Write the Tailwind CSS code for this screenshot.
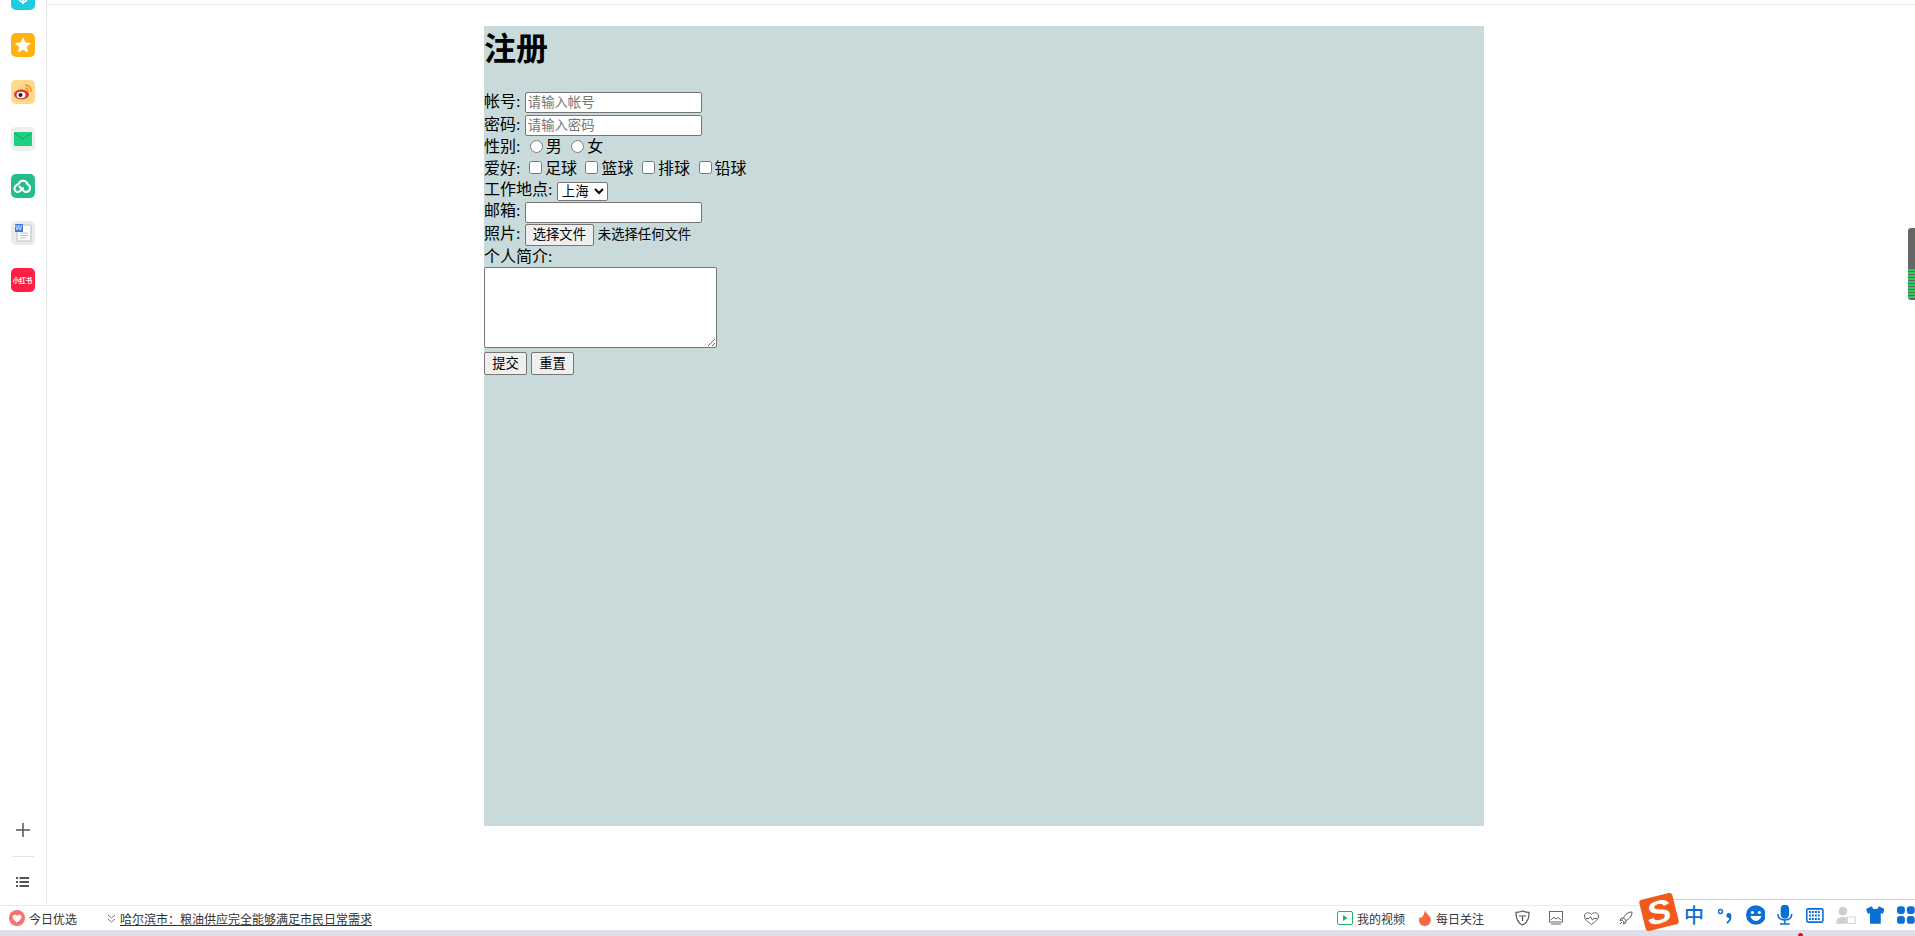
<!DOCTYPE html>
<html lang="zh-CN">
<head>
  <meta charset="UTF-8">
  <title>注册</title>
  <script src="https://cdn.jsdelivr.net/npm/@tailwindcss/browser@4"></script>
</head>
<body class="bg-white">
  <div class="relative flex flex-col h-[936px] w-[1915px] overflow-hidden font-['Liberation_Serif','Noto_Sans_CJK_SC',serif] text-black">
    <div class="flex h-[905px]">
      <!-- 左侧边栏 -->
      <aside class="flex flex-col items-center w-[47px] h-full border-r border-[#e4e4e4] overflow-hidden pr-[1px]">
        <div class="flex flex-col gap-[23px] -mt-[14px]">
          <div class="w-6 h-6 rounded-[5px] bg-[#1fcbe0] flex items-center justify-center">
            <svg width="14" height="14" viewBox="0 0 14 14" fill="none" stroke="#fff" stroke-width="2"><path d="M3 3v4a4 4 0 0 0 8 0V3M7 7v6"/></svg>
          </div>
          <div class="w-6 h-6 rounded-[5px] bg-[#ffb30f] flex items-center justify-center">
            <svg width="18" height="18" viewBox="0 0 24 24" fill="#fff"><path d="M12 1.500l3.300 7 7.500.9-5.600 5.200 1.500 7.600-6.700-3.800-6.700 3.800 1.500-7.600L1.200 9.400l7.500-.9z"/></svg>
          </div>
          <div class="w-6 h-6 rounded-[5px] bg-[#ffd98c] flex items-center justify-center">
            <svg width="22" height="22" viewBox="0 0 22 22" fill="none"><ellipse cx="9.500" cy="13.500" rx="7.500" ry="5" fill="#e6342a"/><ellipse cx="9" cy="14" rx="4.500" ry="3.200" fill="#fff"/><circle cx="8.500" cy="14" r="2" fill="#222"/><path d="M13 4a6 6 0 0 1 6 7" stroke="#f08a1d" stroke-width="1.500"/><path d="M13 7a3 3 0 0 1 3 4" stroke="#f08a1d" stroke-width="1.300"/></svg>
          </div>
          <div class="w-6 h-6 rounded-[5px] bg-[#eeeeee] flex items-center justify-center">
            <svg width="18" height="14" viewBox="0 0 18 14"><rect width="18" height="14" rx="1" fill="#1fcf80"/><path d="M0 1l9 6 9-6" fill="none" stroke="#12a864" stroke-width="1"/></svg>
          </div>
          <div class="w-6 h-6 rounded-[5px] bg-[#25bd8c] flex items-center justify-center">
            <svg width="22" height="18" viewBox="0 0 22 18" fill="none" stroke="#fff" stroke-width="2"><path d="M7 9c2 2 4 6 7 6a4 4 0 0 0 1.500-7.700A4.500 4.500 0 0 0 7 6.500C5.500 8 3 8 2.500 11a3.500 3.500 0 0 0 3.500 4c2.500 0 4-3 5.500-4.500"/></svg>
          </div>
          <div class="relative w-6 h-6 rounded-[5px] bg-[#ebebeb] flex items-center justify-center">
            <svg width="16" height="18" viewBox="0 0 16 18" class="ml-[2px]"><rect x="1" y="1" width="14" height="16" rx="1" fill="#fff" stroke="#c4c4c4" stroke-width="1.200"/><path d="M4 9h8M4 11.500h8M4 14h6" stroke="#c4c4c4"/></svg>
            <span class="absolute left-[4px] top-[3px] w-2 h-2 bg-[#3c78ea] text-white text-[7px] leading-[8px] text-center font-['Liberation_Sans']">W</span>
          </div>
          <div class="w-6 h-6 rounded-[5px] bg-[#ff1f45] flex items-center justify-center overflow-hidden">
            <span class="text-white text-[6.500px] font-bold leading-none whitespace-nowrap font-['Noto_Sans_CJK_SC']">小红书</span>
          </div>
        </div>
        <div class="mt-auto flex flex-col items-center w-full">
          <svg width="14" height="14" viewBox="0 0 14 14" stroke="#555" stroke-width="1.500"><path d="M7 0v14M0 7h14"/></svg>
          <div class="w-[22px] h-px bg-[#e4e4e4] mt-[19px] mb-[20px]"></div>
          <svg width="13" height="10" viewBox="0 0 13 10" fill="#555" class="mb-[18px]"><path d="M0 0h2v2H0zM3.500 0H13v2H3.500zM0 4h2v2H0zM3.500 4H13v2H3.500zM0 8h2v2H0zM3.500 8H13v2H3.500z"/></svg>
        </div>
      </aside>

      <!-- 主内容 -->
      <main class="flex-1">
        <div class="h-[5px] border-b border-[#ececec]"></div>
        <div class="w-[1000px] h-[800px] mt-[21px] ml-[437px] bg-[#c8dbda] text-[16px]">
          <h1 class="text-[32px] font-bold leading-[37px] pt-[2px] mb-[26px] font-['Noto_Sans_CJK_SC']">注册</h1>
          <form>
            <div class="flex items-center h-[23px]"><label class="mb-[2px]">帐号:</label><input type="text" placeholder="请输入帐号" class="ml-[4.400px] w-[177px] h-[21px] px-[2px] bg-white border border-[#767676] rounded-[2px] text-[13.330px] placeholder:text-[#757575]"></div>
            <div class="flex items-center h-[23px]"><label class="mb-[2px]">密码:</label><input type="password" placeholder="请输入密码" class="ml-[4.400px] w-[177px] h-[21px] px-[2px] bg-white border border-[#767676] rounded-[2px] text-[13.330px] placeholder:text-[#757575]"></div>
            <div class="flex items-center h-[22px]"><label class="mb-[2px]">性别:</label>
              <input type="radio" name="sex" class="ml-[9.400px] mr-[3px] mb-[4px] w-[13px] h-[13px]"><span class="mb-[2px]">男</span>
              <input type="radio" name="sex" class="ml-[9.400px] mr-[3px] mb-[4px] w-[13px] h-[13px]"><span class="mb-[2px]">女</span>
            </div>
            <div class="flex items-center h-[22px]"><label class="mb-[3px]">爱好:</label>
              <input type="checkbox" class="ml-[8.500px] mr-[3px] mb-[5px] w-[13px] h-[13px]"><span class="mb-[3px]">足球</span>
              <input type="checkbox" class="ml-[8.500px] mr-[3px] mb-[5px] w-[13px] h-[13px]"><span class="mb-[3px]">篮球</span>
              <input type="checkbox" class="ml-[8.500px] mr-[3px] mb-[5px] w-[13px] h-[13px]"><span class="mb-[3px]">排球</span>
              <input type="checkbox" class="ml-[8.500px] mr-[3px] mb-[5px] w-[13px] h-[13px]"><span class="mb-[3px]">铅球</span>
            </div>
            <div class="flex items-center h-[20px]"><label class="mb-[2px]">工作地点:</label>
              <select class="ml-[4.400px] w-[51px] h-[19px] bg-white border border-[#767676] rounded-[2px] text-[13.330px] leading-none"><option>上海</option><option>北京</option></select>
            </div>
            <div class="flex items-center h-[22px]"><label class="mb-[2px]">邮箱:</label><input type="email" class="ml-[4.400px] w-[177px] h-[21px] px-[2px] bg-white border border-[#767676] rounded-[2px] text-[13.330px]"></div>
            <div class="flex items-center h-[23px]"><label class="mb-[2px]">照片:</label>
              <button type="button" class="ml-[4.400px] w-[69px] h-[22px] bg-[#efefef] border border-[#767676] rounded-[2px] text-[13.330px] leading-none">选择文件</button>
              <span class="ml-[4px] text-[13.330px]">未选择任何文件</span>
            </div>
            <div class="h-[21px] leading-[21px]"><label>个人简介:</label></div>
            <textarea class="block w-[233px] h-[81px] bg-white border border-[#767676] rounded-[2px]"></textarea>
            <div class="flex gap-[4px] mt-[4px]">
              <button type="submit" class="w-[43px] h-[23px] bg-[#efefef] border border-[#767676] rounded-[2px] text-[13.330px] leading-none">提交</button>
              <button type="reset" class="w-[43px] h-[23px] bg-[#efefef] border border-[#767676] rounded-[2px] text-[13.330px] leading-none">重置</button>
            </div>
          </form>
        </div>
      </main>
    </div>

    <!-- 底部状态栏 -->
    <footer class="flex items-center h-[25px] border-t border-[#ebebeb] text-[12px] text-[#333] font-['Noto_Sans_CJK_SC']">
      <svg width="16" height="16" viewBox="0 0 16 16" class="ml-[9px]"><circle cx="8" cy="8" r="8" fill="#fb6f6f"/><path d="M8 12.500C5 10.300 3.500 8.800 3.500 6.800 3.500 4.500 6.700 4 8 6c1.300-2 4.500-1.500 4.500.8 0 2-1.500 3.500-4.500 5.700z" fill="#fff"/></svg>
      <span class="ml-[4px] w-[48px] mt-[2px]">今日优选</span>
      <svg width="9" height="9" viewBox="0 0 9 9" fill="none" stroke="#777" class="ml-[30px]"><path d="M1 1l3.500 3L8 1M1 5l3.500 3L8 5"/></svg>
      <a class="ml-[4px] underline mt-[2px]">哈尔滨市：粮油供应完全能够满足市民日常需求</a>
      <svg width="16" height="14" viewBox="0 0 16 14" fill="none" class="ml-[965px]"><rect x=".5" y=".5" width="15" height="13" rx="1.500" stroke="#1fb45f"/><path d="M6 4l4.500 3L6 10z" fill="#1fb45f"/></svg>
      <span class="ml-[4px] w-[48px] mt-[2px]">我的视频</span>
      <svg width="14" height="16" viewBox="0 0 14 16" class="ml-[13px]"><path d="M7 0c.500 3 3 4 5 7 2 3.500 0 9-5 9s-7-4.500-5.500-8C2 6.500 3 8 3.500 8 5 6 6.500 3.500 7 0z" fill="#f7683f"/></svg>
      <span class="ml-[4px] w-[48px] mt-[2px]">每日关注</span>
      <svg width="15" height="16" viewBox="0 0 15 16" fill="none" stroke="#555" stroke-width="1.200" class="ml-[31px]"><path d="M7.500 1C5 2 3 2.300 1 2.300 .8 8 2 12.500 7.500 15 13 12.500 14.200 8 14 2.300 12 2.300 10 2 7.500 1zM4 6h7M7.500 6v5"/></svg>
      <svg width="14" height="14" viewBox="0 0 14 14" fill="none" stroke="#666" class="ml-[19px]"><rect x=".5" y=".5" width="13" height="10.500"/><path d="M2 9l3-3 2 2 2-1.500L12 9M2 13h10"/></svg>
      <svg width="15" height="13" viewBox="0 0 15 13" fill="none" stroke="#666" class="ml-[21px]"><path d="M7.500 12.500C3 9.500 .5 7 .5 4 .5.500 5.500-.5 7.500 2.500 9.500-.5 14.500.5 14.500 4c0 3-2.500 5.500-7 8.500zM2 6.500h3l1.500-2 2 3.500 1-1.500H13"/></svg>
      <svg width="14" height="14" viewBox="0 0 14 14" fill="none" stroke="#555" class="ml-[20px]"><path d="M13 1C9 1 6 3.500 4.500 7L7 9.500C10.500 8 13 5 13 1zM4.500 7L2 7.500 1 9.500l3-.5M7 9.500l-.5 2.500-2 1 .5-3M3 11l-2 2"/></svg>
    </footer>
    <div class="h-[6px] bg-[#dfdfeb]"></div>

    <!-- 输入法工具条（浮在页面之上） -->
    <div class="absolute left-[1668px] top-[899px] w-[247px] h-[31px] border-t border-[#bcd4e6] bg-white flex items-center text-[#0b6fd6]">
      <span class="ml-[16px] text-[20px] leading-none font-medium font-['Noto_Sans_CJK_SC']">中</span>
      <svg width="17" height="18" viewBox="0 0 17 18" fill="none" class="ml-[14px]"><circle cx="2.500" cy="5.500" r="2" stroke="#0b6fd6" stroke-width="1.500"/><circle cx="11" cy="9.500" r="2.500" fill="#0b6fd6"/><path d="M12.500 9.500C13 13 11.500 15.500 9 17" stroke="#0b6fd6" stroke-width="2"/></svg>
      <svg width="20" height="20" viewBox="0 0 20 20" class="ml-[11px]"><circle cx="10" cy="10" r="10" fill="#0b6fd6"/><circle cx="6.500" cy="7.500" r="1.600" fill="#fff"/><circle cx="13.500" cy="7.500" r="1.600" fill="#fff"/><path d="M4.500 11h11c-.5 3-2.800 5-5.500 5s-5-2-5.500-5z" fill="#fff"/></svg>
      <svg width="16" height="20" viewBox="0 0 16 20" fill="none" stroke="#0b6fd6" stroke-width="1.500" class="ml-[12px]"><rect x="4.500" y="0" width="7" height="13" rx="3.500" fill="#0b6fd6"/><path d="M1 9c0 4 3 6 7 6s7-2 7-6M8 15v4M3 19.200h10"/></svg>
      <svg width="18" height="15" viewBox="0 0 18 15" class="ml-[13px]"><rect x=".8" y=".8" width="16.400" height="13.400" rx="1.500" fill="#fff" stroke="#0b6fd6" stroke-width="1.600"/><path d="M3 4h12M3 7.500h12M3 11h12" stroke="#0b6fd6" stroke-width="2" stroke-dasharray="2 1"/></svg>
      <svg width="20" height="18" viewBox="0 0 20 18" class="ml-[12px]"><circle cx="7" cy="5" r="4.500" fill="#cfcfcf"/><path d="M0 18c0-5 3-7 7-7 2 0 3 .5 4 1v6z" fill="#cfcfcf"/><rect x="11.500" y="11" width="8" height="6.500" fill="#fff" stroke="#cfcfcf"/></svg>
      <svg width="19" height="18" viewBox="0 0 19 18" fill="#0b6fd6" class="ml-[10px]"><path d="M6 0L0 3l2 5 2-1v11h11V7l2 1 2-5-6-3c-.5 2-1.500 3-3.500 3S6.500 2 6 0z"/></svg>
      <svg width="18" height="18" viewBox="0 0 18 18" fill="#0b6fd6" class="ml-[13px]"><rect width="8" height="8" rx="3"/><rect x="10" width="8" height="8" rx="3"/><rect y="10" width="8" height="8" rx="3"/><rect x="10" y="10" width="8" height="8" rx="3"/></svg>
    </div>
    <div class="absolute left-[1642px] top-[896px] w-[34px] h-[32px] rounded-[3px] bg-[#f25a1c] -rotate-[14deg] flex items-center justify-center">
      <span class="text-white text-[32px] font-bold italic leading-none scale-x-[1.15] font-['Liberation_Sans']">S</span>
    </div>
    <div class="absolute left-[1798px] top-[933px] w-[5px] h-[5px] rounded-full bg-[#e0101a]"></div>

    <!-- 右侧悬浮条 -->
    <div class="absolute left-[1908px] top-[228px] w-[7px] h-[72px] rounded-l-[3px] bg-[#666] overflow-hidden flex flex-col justify-end gap-[1px] pb-[2px]">
      <div class="h-[2px] bg-[#2ecc5f]"></div><div class="h-[2px] bg-[#2ecc5f]"></div><div class="h-[2px] bg-[#2ecc5f]"></div><div class="h-[2px] bg-[#2ecc5f]"></div><div class="h-[2px] bg-[#2ecc5f]"></div><div class="h-[2px] bg-[#2ecc5f]"></div><div class="h-[2px] bg-[#2ecc5f]"></div><div class="h-[2px] bg-[#2ecc5f]"></div><div class="h-[2px] bg-[#2ecc5f]"></div><div class="h-[2px] bg-[#2ecc5f]"></div>
    </div>
  </div>
</body>
</html>
